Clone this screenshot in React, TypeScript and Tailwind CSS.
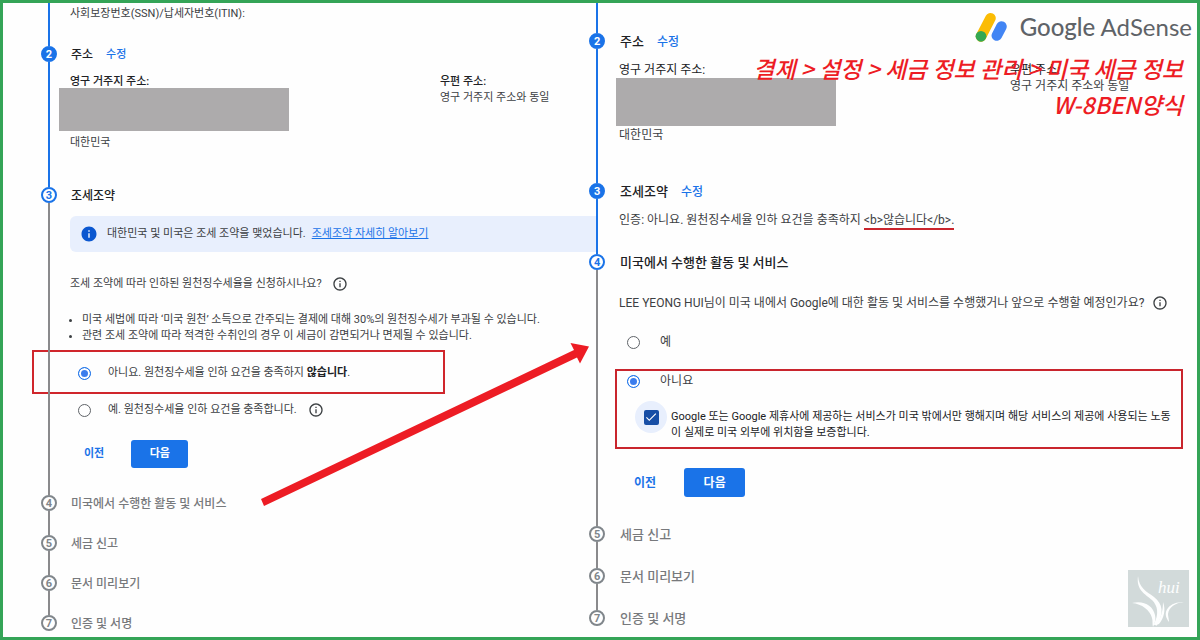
import type { ReactNode } from "react";
import { MdCheck, MdInfo, MdInfoOutline } from "react-icons/md";

type StepState = "done" | "current" | "pending";

interface StepProps {
  number?: number;
  title?: string;
  state: StepState;
  editable?: boolean;
  last?: boolean;
  titleClass: string;
  className: string;
  children?: ReactNode;
}

const circleStyles = {
  done: "border-[#1a73e8] bg-[#1a73e8] text-white",
  current: "border-[#1a73e8] bg-white text-[#1a73e8]",
  pending: "border-[#80868b] bg-white text-[#80868b]",
};

const Step = ({
  number,
  title,
  state,
  editable,
  last,
  titleClass,
  className,
  children,
}: StepProps) => {
  return (
    <li className={`flex ${className}`}>
      <div className="relative z-10 flex w-4 shrink-0 flex-col items-center">
        {number && (
          <span
            className={`flex size-4 shrink-0 items-center justify-center rounded-full border-2 text-[11px] leading-none font-bold ${circleStyles[state]}`}
          >
            {number}
          </span>
        )}
        {!last && (
          <span
            className={`w-[2px] flex-1 ${state === "done" ? "bg-[#1a73e8]" : "bg-[#8a8a8c]"}`}
          ></span>
        )}
      </div>
      <div className="min-w-0 flex-1">
        {title && (
          <div className="flex h-4 items-center gap-[13px] pt-px pl-px whitespace-nowrap">
            <h2
              className={`${titleClass} ${state === "pending" ? "text-[#77797c]" : "text-[#202124]"}`}
            >
              {title}
            </h2>
            {editable && (
              <a href="#" className="font-medium text-[#1a73e8]">
                수정
              </a>
            )}
          </div>
        )}
        {children}
      </div>
    </li>
  );
};

const Radio = ({
  id,
  name,
  checked,
}: {
  id: string;
  name: string;
  checked?: boolean;
}) => (
  <input
    type="radio"
    id={id}
    name={name}
    defaultChecked={checked}
    className="size-[13px] shrink-0 appearance-none rounded-full border border-[#5f6368] bg-white checked:border-[#1a73e8] checked:bg-[#3b7ded] checked:shadow-[inset_0_0_0_2px_white]"
  />
);

const LeftPanel = () => {
  const title = "text-[12px] font-medium";
  const row = "gap-[13px]";
  return (
    <ol className="pl-[38px] text-[11px] leading-4 text-[#3c4043]">
      <Step state="done" titleClass={title} className={`${row} h-[43px]`}>
        <p className="pt-[3px]">사회보장번호(SSN)/납세자번호(ITIN):</p>
      </Step>

      <Step
        number={2}
        title="주소"
        state="done"
        editable
        titleClass={title}
        className={`${row} h-[141px]`}
      >
        <div className="mt-3 flex">
          <div className="w-[370px] shrink-0">
            <p className="font-medium text-[#202124]">영구 거주지 주소:</p>
            <div className="-mt-[2px] -ml-[11px] h-[43px] w-[230px] bg-[#adabac]"></div>
            <p className="mt-1">대한민국</p>
          </div>
          <div>
            <p className="font-medium text-[#202124]">우편 주소:</p>
            <p>영구 거주지 주소와 동일</p>
          </div>
        </div>
      </Step>

      <Step
        number={3}
        title="조세조약"
        state="current"
        titleClass={title}
        className={`${row} h-[308px]`}
      >
        <div className="mt-[13px] -mr-[9px] flex h-9 items-center rounded-l-md bg-[#e8effd] pl-[10px]">
          <MdInfo className="size-[18px] text-[#0b57d0]" />
          <p className="ml-[9px]">대한민국 및 미국은 조세 조약을 맺었습니다.</p>
          <a href="#" className="ml-[6px] text-[#1a73e8] underline">
            조세조약 자세히 알아보기
          </a>
        </div>

        <div className="mt-6 flex items-center gap-[10px]">
          <p>조세 조약에 따라 인하된 원천징수세율을 신청하시나요?</p>
          <MdInfoOutline className="size-4 text-[#3c4043]" />
        </div>

        <ul className="mt-5 list-disc pl-3 whitespace-nowrap">
          <li>
            미국 세법에 따라 ‘미국 원천’ 소득으로 간주되는 결제에 대해 30%의
            원천징수세가 부과될 수 있습니다.
          </li>
          <li>
            관련 조세 조약에 따라 적격한 수취인의 경우 이 세금이 감면되거나
            면제될 수 있습니다.
          </li>
        </ul>

        <div className="relative mt-2 flex h-[42px] items-center pl-2">
          <Radio id="treaty-no" name="treaty" checked />
          <label htmlFor="treaty-no" className="ml-[17px]">
            아니요. 원천징수세율 인하 요건을 충족하지{" "}
            <b className="text-[#202124]">않습니다</b>.
          </label>
          <div className="pointer-events-none absolute -top-[2px] bottom-0 -left-[38px] w-[413px] border-2 border-[#d0262c]"></div>
        </div>
        <div className="mt-2 flex items-center pl-2">
          <Radio id="treaty-yes" name="treaty" />
          <label htmlFor="treaty-yes" className="mr-[11px] ml-[17px]">
            예. 원천징수세율 인하 요건을 충족합니다.
          </label>
          <MdInfoOutline className="size-4 text-[#3c4043]" />
        </div>

        <div className="mt-[22px] flex gap-[27px] pl-[14px]">
          <button type="button" className="font-bold text-[#1a73e8]">
            이전
          </button>
          <button
            type="button"
            className="h-7 w-[57px] rounded-[3px] bg-[#1a73e8] font-bold text-white"
          >
            다음
          </button>
        </div>
      </Step>

      <Step
        number={4}
        title="미국에서 수행한 활동 및 서비스"
        state="pending"
        titleClass={title}
        className={`${row} h-10`}
      />
      <Step
        number={5}
        title="세금 신고"
        state="pending"
        titleClass={title}
        className={`${row} h-10`}
      />
      <Step
        number={6}
        title="문서 미리보기"
        state="pending"
        titleClass={title}
        className={`${row} h-10`}
      />
      <Step
        number={7}
        title="인증 및 서명"
        state="pending"
        last
        titleClass={title}
        className={row}
      />
    </ol>
  );
};

const RightPanel = () => {
  const title = "text-[13px] font-medium";
  const row = "gap-[14px]";
  return (
    <ol className="min-w-0 pl-px text-[12px] leading-4 text-[#3c4043]">
      <Step state="done" titleClass={title} className={`${row} h-[30px]`} />

      <Step
        number={2}
        title="주소"
        state="done"
        editable
        titleClass={title}
        className={`${row} h-[150px]`}
      >
        <div className="mt-[13px] flex">
          <div className="w-[391px] shrink-0">
            <p className="text-[#202124]">영구 거주지 주소:</p>
            <div className="-ml-[3px] h-12 w-[220px] bg-[#adabac]"></div>
            <p className="mt-px">대한민국</p>
          </div>
          <div className="whitespace-nowrap">
            <p className="text-[#202124]">우편 주소:</p>
            <p>영구 거주지 주소와 동일</p>
          </div>
        </div>
      </Step>

      <Step
        number={3}
        title="조세조약"
        state="done"
        editable
        titleClass={title}
        className={`${row} h-[71px]`}
      >
        <p className="mt-[13px] whitespace-nowrap">
          인증: 아니요. 원천징수세율 인하 요건을 충족하지{" "}
          <span className="inline-block h-[18px] border-b-2 border-[#c9252d]">
            &lt;b&gt;않습니다&lt;/b&gt;.
          </span>
        </p>
      </Step>

      <Step
        number={4}
        title="미국에서 수행한 활동 및 서비스"
        state="current"
        titleClass={title}
        className={`${row} h-[272px]`}
      >
        <div className="mt-[25px] flex items-center gap-2 whitespace-nowrap">
          <p>
            LEE YEONG HUI님이 미국 내에서 Google에 대한 활동 및 서비스를
            수행했거나 앞으로 수행할 예정인가요?
          </p>
          <MdInfoOutline className="size-4 shrink-0 text-[#3c4043]" />
        </div>

        <div className="mt-[23px] flex items-center pl-2">
          <Radio id="activity-yes" name="activity" />
          <label htmlFor="activity-yes" className="ml-5">
            예
          </label>
        </div>

        <div className="relative mt-5 h-[78px] pt-px">
          <div className="flex items-center pt-[2px] pl-2">
            <Radio id="activity-no" name="activity" checked />
            <label htmlFor="activity-no" className="ml-5">
              아니요
            </label>
          </div>
          <div className="mt-3 flex pl-4">
            <span className="relative flex size-8 shrink-0 items-center justify-center rounded-full bg-[#e8effd]">
              <input
                type="checkbox"
                id="outside-us"
                defaultChecked
                className="size-[15px] appearance-none rounded-[2px] bg-[#174ea6]"
              />
              <MdCheck className="pointer-events-none absolute size-[14px] text-white" />
            </span>
            <label
              htmlFor="outside-us"
              className="mt-2 ml-1 text-[11px] whitespace-nowrap text-[#202124]"
            >
              Google 또는 Google 제휴사에 제공하는 서비스가 미국 밖에서만
              행해지며 해당 서비스의 제공에 사용되는 노동
              <br />이 실제로 미국 외부에 위치함을 보증합니다.
            </label>
          </div>
          <div className="pointer-events-none absolute -top-px right-[14px] -bottom-px -left-1 border-2 border-[#c9252d]"></div>
        </div>

        <div className="mt-5 flex gap-7 pl-[15px]">
          <button type="button" className="font-bold text-[#1a73e8]">
            이전
          </button>
          <button
            type="button"
            className="h-[29px] w-[61px] rounded-[3px] bg-[#1a73e8] font-bold text-white"
          >
            다음
          </button>
        </div>
      </Step>

      <Step
        number={5}
        title="세금 신고"
        state="pending"
        titleClass={title}
        className={`${row} h-[42px]`}
      />
      <Step
        number={6}
        title="문서 미리보기"
        state="pending"
        titleClass={title}
        className={`${row} h-[42px]`}
      />
      <Step
        number={7}
        title="인증 및 서명"
        state="pending"
        last
        titleClass={title}
        className={row}
      />
    </ol>
  );
};

const AdSenseLogo = () => (
  <div className="absolute top-1 right-[5px] flex items-center gap-3 text-[#5f6368]">
    <svg width="33" height="32" viewBox="0 0 33 32" fill="none">
      <path
        d="M15.5 7.2 6 25.5"
        stroke="#fbbc04"
        strokeWidth="10.5"
        strokeLinecap="round"
      />
      <path
        d="M26.5 15.5 21.8 24.6"
        stroke="#4285f4"
        strokeWidth="10.5"
        strokeLinecap="round"
      />
      <circle cx="6" cy="25.3" r="5.4" fill="#34a853" />
    </svg>
    <p className="font-[Lato,sans-serif] text-[24px] leading-10 whitespace-nowrap">
      <span className="font-medium">Google</span> AdSense
    </p>
  </div>
);

const Watermark = () => (
  <svg
    className="absolute right-2 bottom-[10px]"
    width="61"
    height="57"
    viewBox="0 0 61 57"
  >
    <rect width="61" height="57" fill="#d2dada" />
    <g fill="#fdfefe">
      <path d="M10 6c1 12 8 15 16 21 9 7 10 16 3 28 1 1-4 0-3-1 5-10 4-18-2-24C17 24 8 20 10 6Z" />
      <path d="M4 33c11-3 21 2 23 12 1 4 0 8-2 12-1-3 0-6-1-9-2-8-10-14-20-15Z" />
      <path d="M56 32c-9 1-15 5-16 12 0 3 1 5 1 8-3-4-5-9-1-14 3-4 9-6 16-6Z" />
      <path d="M35 32c3 8 1 16-4 22l-3 1c5-7 7-14 7-23Z" />
    </g>
    <text
      x="30"
      y="23"
      fill="#fdfefe"
      fontFamily="Liberation Serif, serif"
      fontStyle="italic"
      fontSize="17"
    >
      hui
    </text>
  </svg>
);

export default function App() {
  return (
    <main className="relative min-h-screen overflow-hidden border-[3px] border-[#34a457] bg-[#fefefe] font-[Roboto,'Noto_Sans_CJK_KR',sans-serif]">
      <div className="grid grid-cols-[49%_51%]">
        <LeftPanel />
        <RightPanel />
      </div>

      <AdSenseLogo />

      <p className="absolute top-[47px] right-[14px] text-right font-['Noto_Sans_CJK_KR',sans-serif] text-[23px] leading-9 font-medium whitespace-nowrap text-[#ed1c24] italic">
        결제 &gt; 설정 &gt; 세금 정보 관리 &gt; 미국 세금 정보
        <br />
        W-8BEN양식
      </p>

      <svg
        className="pointer-events-none absolute top-[339px] left-[257px] z-20"
        width="330"
        height="168"
        viewBox="260 342 330 168"
      >
        <path
          d="M261 499 574 350 570.5 343 589 346.5 580 363.5 577 357.5 264 506Z"
          fill="#ed1c24"
        />
      </svg>

      <Watermark />
    </main>
  );
}
